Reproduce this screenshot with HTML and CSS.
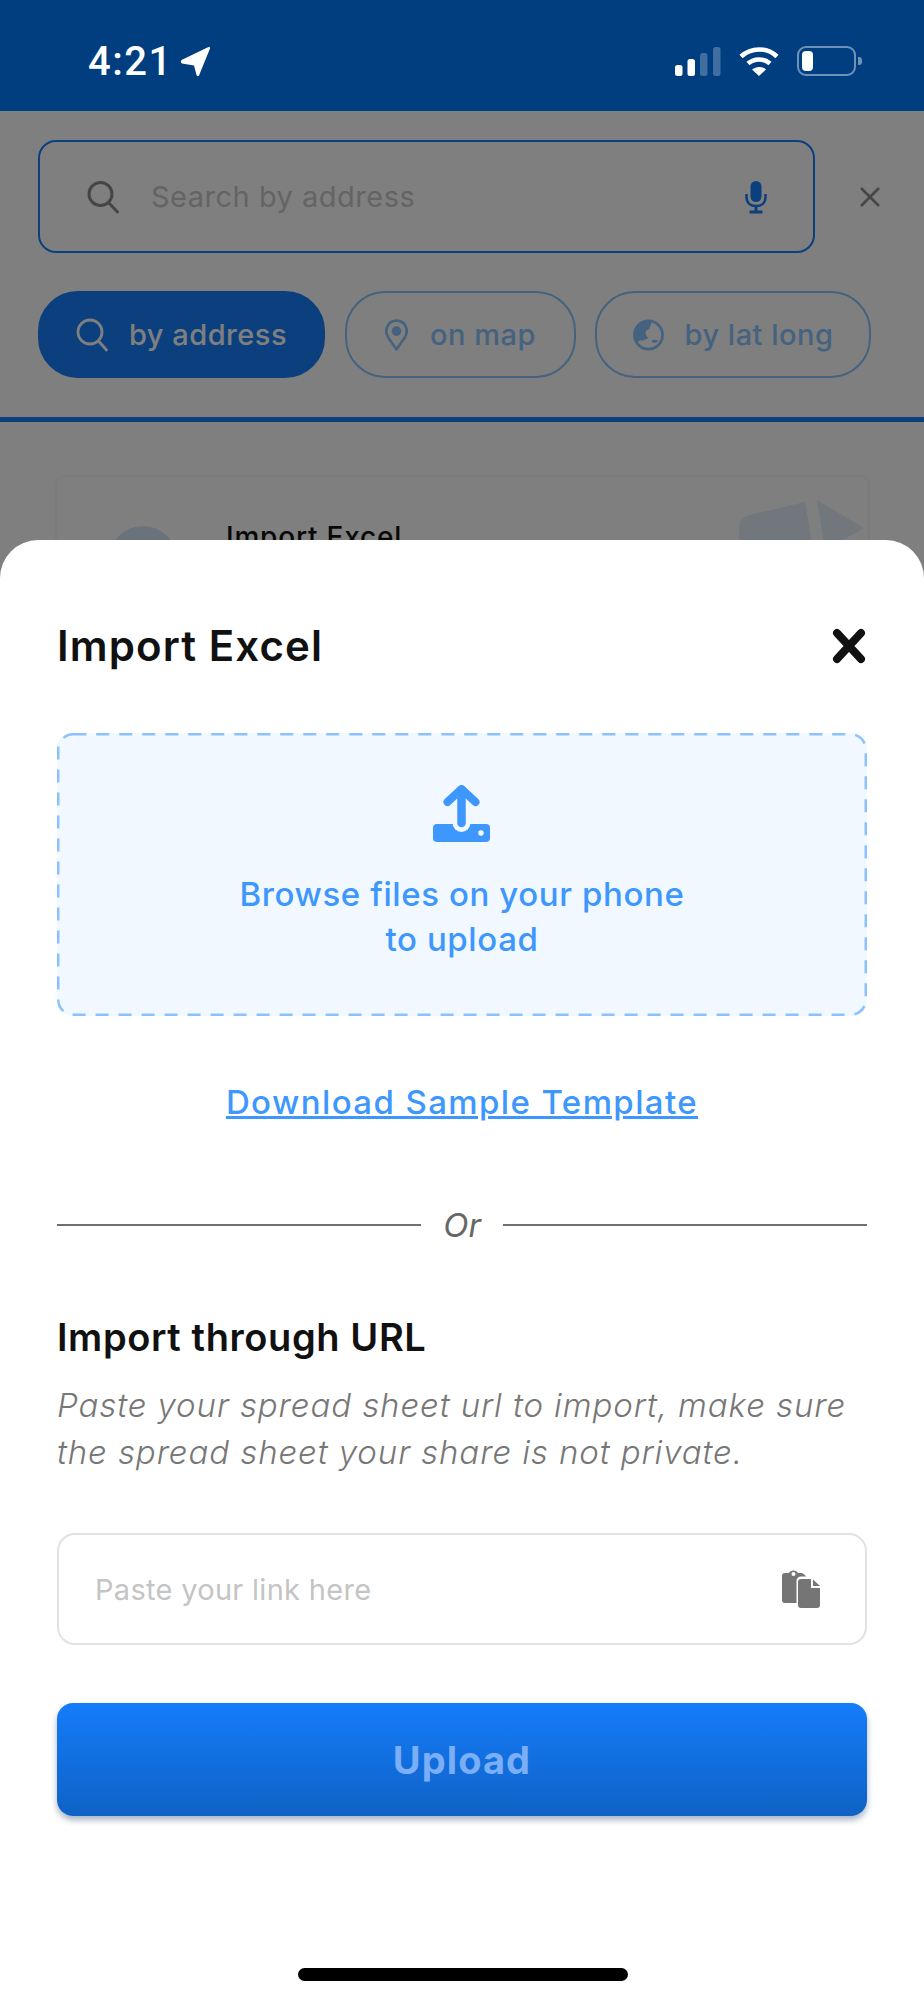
FILE: index.html
```html
<!DOCTYPE html>
<html>
    <head>
        <meta charset="utf-8">
        <title>Import Excel</title>
        <link rel="stylesheet" href="styles.css">
    </head>
    <body>
        <div class="screen">
            <div class="status-bar">
                <div class="status-left">
                    <span class="clock">4:21</span>
                    <svg width="31" height="31" viewBox="0 0 31 31"><path d="M1.500 14 L28.500 1 Q30.500 0.500 30 2.500 L19 29.500 Q17.500 31 16.500 29 L14 19.500 L2 17.500 Q0 16 1.500 14Z" fill="#fff"/></svg>
                </div>
                <div class="status-right">
                    <svg width="46" height="30" viewBox="0 0 46 30">
                        <rect x="0" y="19" width="7.500" height="11" rx="2.500" fill="#fff"/>
                        <rect x="12.500" y="13" width="7.500" height="17" rx="2.500" fill="#fff"/>
                        <rect x="25" y="7" width="7.500" height="23" rx="2.500" fill="#fff" opacity=".25"/>
                        <rect x="38" y="1" width="7.500" height="29" rx="2.500" fill="#fff" opacity=".25"/>
                    </svg>
                    <svg width="40" height="30" viewBox="0 0 40 30" fill="none" stroke="#fff" stroke-width="4.500">
                        <path d="M2 10.500 C12 1 28 1 38 10.500"/>
                        <path d="M9 17.500 C15 12 25 12 31 17.500"/>
                        <path d="M13 23.500 L20 30 L27 23.500 C23 20 17 20 13 23.500Z" fill="#fff" stroke="none"/>
                    </svg>
                    <div class="battery">
                        <div class="battery-body"><div class="battery-level"></div></div>
                        <div class="battery-tip"></div>
                    </div>
                </div>
            </div>

            <div class="search-row">
                <div class="search-box">
                    <svg width="34" height="34" viewBox="0 0 34 34" fill="none" stroke="#8a8a8a" stroke-width="3"><circle cx="14.500" cy="14" r="11.500"/><path d="M23 23 L31.500 32" stroke-linecap="round"/></svg>
                    <span class="search-text">Search by address</span>
                    <svg width="26" height="34" viewBox="0 0 26 34"><rect x="7.500" y="1" width="11" height="21" rx="5.500" fill="#167efc"/><path d="M3.500 14 V17 C3.500 23 7.500 26 13 26 C18.500 26 22.500 23 22.500 17 V14" fill="none" stroke="#167efc" stroke-width="2.500"/><path d="M13 26 V31 M6.500 32 H19.500" stroke="#167efc" stroke-width="3"/></svg>
                </div>
                <svg class="search-close" width="24" height="24" viewBox="0 0 24 24" stroke-width="2.600" fill="none"><path d="M3 3 L21 21 M21 3 L3 21" stroke="#8c8c8c"/></svg>
            </div>

            <div class="tabs">
                <div class="tab tab-address tab-active">
                    <svg width="32" height="34" viewBox="0 0 32 34" fill="none" stroke="#fff" stroke-width="2.800"><circle cx="14" cy="14" r="12"/><path d="M22.500 23 L30.500 32" stroke-linecap="round"/></svg>
                    <span>by address</span>
                </div>
                <div class="tab tab-map">
                    <svg width="25" height="34" viewBox="0 0 26 34" fill="none" stroke="#8ac4ff" stroke-width="2.800"><path d="M13 32 L4 19 C0 12 4 2 13 2 C22 2 26 12 22 19Z" stroke-linejoin="round"/><circle cx="13" cy="13" r="5" fill="#8ac4ff" stroke="none"/></svg>
                    <span>on map</span>
                </div>
                <div class="tab tab-latlong">
                    <svg width="31" height="34" viewBox="0 0 32 34"><circle cx="16" cy="17" r="14.500" fill="none" stroke="#8ac4ff" stroke-width="2.800"/><path d="M15 3 C8 3 2 9 2 17 C2 21 3 23 5 25 C6 22 9 22 10 23 L16 20 C13 17 12 15 14 12 C18 11 18 7 19 4 C18 3 16 3 15 3Z M19 23 C21 21 24 22 26 23 C24 26 20 26 19 23Z" fill="#8ac4ff"/></svg>
                    <span>by lat long</span>
                </div>
            </div>
            <div class="tabs-line"></div>

            <div class="list">
                <div class="list-card">
                    <div class="list-icon"></div>
                    <div class="list-title">Import Excel</div>
                    <svg class="list-art" width="125" height="60" viewBox="0 0 125 60"><path d="M0 28 Q0 18 10 15 L66 2 L76 60 H0Z M78 0 L125 28 L86 50Z" fill="#e2eef8"/></svg>
                </div>
            </div>

            <div class="dim"></div>

            <div class="sheet">
                <div class="sheet-head">
                    <h1>Import Excel</h1>
                    <svg width="36" height="36" viewBox="0 0 36 36" fill="none" stroke="#111" stroke-width="8" stroke-linecap="round"><path d="M6 5 L30 31 M30 5 L6 31"/></svg>
                </div>

                <div class="drop-zone">
                    <svg class="drop-border" width="810" height="283" viewBox="0 0 810 283"><rect x="1.250" y="1.250" width="807.500" height="280.500" rx="15" fill="none" stroke="#8bc1ff" stroke-width="2.500" stroke-dasharray="13 10"/></svg>
                    <svg width="58" height="58" viewBox="0 0 58 58">
                        <path d="M0 43 Q0 39 4 39 H53 Q57 39 57 43 V53 Q57 57 53 57 H4 Q0 57 0 53Z" fill="#3e97fd"/>
                        <circle cx="28.500" cy="38" r="9" fill="#f1f8ff"/>
                        <circle cx="48" cy="48" r="2.700" fill="#fff"/>
                        <path d="M28.500 5 V38" stroke="#3e97fd" stroke-width="8.500" stroke-linecap="round" fill="none"/>
                        <path d="M14.500 17 L28.500 4 L42.500 17" stroke="#3e97fd" stroke-width="8" stroke-linecap="round" stroke-linejoin="round" fill="none"/>
                    </svg>
                    <p>Browse files on your phone<br>to upload</p>
                </div>

                <a class="template-link" href="#">Download Sample Template</a>

                <div class="divider"><span>Or</span></div>

                <h2>Import through URL</h2>
                <p class="hint">Paste your spread sheet url to import, make sure<br>the spread sheet your share is not private.</p>

                <div class="link-box">
                    <span>Paste your link here</span>
                    <svg width="38" height="38" viewBox="0 0 38 38">
                        <path d="M3 3 H7 C8 -0.500 15 -0.500 16 3 H19 C21 3 23 5 24 6.500 H19 C16.500 6.500 14.500 8.500 14.500 11 V33 H3 C1 33 0 32 0 30 V6 C0 4 1 3 3 3Z" fill="#757575"/>
                        <circle cx="11.500" cy="4" r="2" fill="#fff"/>
                        <path d="M19 9 H29 V18 H38 V35 C38 37 37 38 35 38 H19 C17 38 16 37 16 35 V12 C16 10 17 9 19 9Z M31 9.500 L38 16 H31Z" fill="#757575"/>
                    </svg>
                </div>

                <button class="upload-btn">Upload</button>

                <div class="home-bar"></div>
            </div>
        </div>
    </body>
</html>
```

FILE: styles.css
```css
* {
    box-sizing: border-box;
}

body {
    margin: 0;
    font-family: Inter, "Noto Sans", sans-serif;
    background: #fff;
}

.screen {
    position: relative;
    width: 924px;
    height: 1999px;
    overflow: hidden;
    background: #fff;
}

.status-bar {
    position: relative;
    z-index: 2;
    height: 111px;
    padding: 46px 62px 0 88px;
    background: #003e80;
    display: flex;
    justify-content: space-between;
    align-items: flex-start;
    color: #fff;
}

.status-left {
    display: flex;
    align-items: center;
    gap: 7px;
}

.clock {
    font-family: Roboto, sans-serif;
    font-size: 40px;
    font-weight: 500;
    letter-spacing: 1.5px;
    line-height: 30px;
}

.status-right {
    display: flex;
    align-items: center;
    gap: 18px;
    height: 30px;
}

.battery {
    display: flex;
    align-items: center;
    gap: 2px;
}

.battery-body {
    width: 59px;
    height: 30px;
    padding: 3px;
    border: 2px solid #6f93b8;
    border-radius: 9px;
}

.battery-level {
    width: 11px;
    height: 100%;
    background: #fff;
    border-radius: 4px;
}

.battery-tip {
    width: 4px;
    height: 8px;
    background: #6f93b8;
    border-radius: 0 3px 3px 0;
}

.search-row {
    display: flex;
    align-items: center;
    padding: 29px 0 0 38px;
}

.search-box {
    width: 777px;
    height: 113px;
    padding: 0 44px 0 46px;
    border: 2.500px solid #167efc;
    border-radius: 18px;
    display: flex;
    align-items: center;
}

.search-text {
    flex: 1;
    margin-left: 31px;
    font-size: 29px;
    letter-spacing: 0.500px;
    color: #c8c8c8;
}

.search-close {
    margin-left: 43px;
}

.tabs {
    display: flex;
    gap: 19.500px;
    padding: 38px 0 0 38px;
}

.tab {
    height: 87px;
    border: 2px solid #8ac4ff;
    border-radius: 40px;
    display: flex;
    align-items: center;
    justify-content: center;
    gap: 21px;
    font-size: 29px;
    font-weight: 500;
    letter-spacing: 0.500px;
    color: #8ac4ff;
}

.tab-address {
    width: 287px;
}

.tab-map {
    width: 231px;
}

.tab-latlong {
    width: 276px;
}

.tab-active {
    background: #167efc;
    border-color: #167efc;
    color: #fff;
}

.tabs-line {
    height: 5px;
    margin-top: 39px;
    background: #167efc;
}

.list {
    padding: 53px 54px 0 55px;
}

.list-card {
    position: relative;
    height: 300px;
    border: 2px solid #f5f7f9;
    border-radius: 10px;
    display: flex;
    align-items: flex-start;
}

.list-icon {
    width: 68px;
    height: 68px;
    margin: 49px 0 0 52px;
    background: #d5e4f7;
    border-radius: 50%;
}

.list-title {
    margin: 43px 0 0 49px;
    font-size: 28px;
    font-weight: 500;
    letter-spacing: 0.800px;
    color: #111;
}

.list-art {
    position: absolute;
    top: 23px;
    right: 4px;
}

.dim {
    position: absolute;
    z-index: 1;
    left: 0;
    right: 0;
    top: 111px;
    bottom: 0;
    background: rgba(0, 0, 0, 0.5);
}

.sheet {
    position: absolute;
    z-index: 3;
    left: 0;
    right: 0;
    top: 540px;
    bottom: 0;
    padding: 0 57px;
    background: #fff;
    border-radius: 38px 38px 0 0;
}

.sheet-head {
    display: flex;
    justify-content: space-between;
    align-items: center;
    height: 130px;
    padding-top: 82px;
}

h1 {
    margin: 0;
    font-size: 42px;
    font-weight: 600;
    letter-spacing: 1.100px;
    line-height: 48px;
    color: #111;
}

.drop-zone {
    position: relative;
    height: 283px;
    margin-top: 63px;
    padding-top: 52px;
    background: #f1f8ff;
    border-radius: 15px;
    display: flex;
    flex-direction: column;
    align-items: center;
}

.drop-border {
    position: absolute;
    left: 0;
    top: 0;
}

.drop-zone p {
    margin: 29px 0 0;
    font-size: 33px;
    font-weight: 500;
    letter-spacing: 0.600px;
    line-height: 45px;
    text-align: center;
    color: #3e97fd;
}

.template-link {
    display: block;
    margin-top: 64px;
    font-size: 33px;
    font-weight: 500;
    letter-spacing: 1.400px;
    line-height: 44px;
    text-align: center;
    color: #3e97fd;
}

.divider {
    margin-top: 81px;
    display: flex;
    align-items: center;
    gap: 22px;
    font-size: 33px;
    font-style: italic;
    line-height: 40px;
    color: #666;
}

.divider::before,
.divider::after {
    content: "";
    flex: 1;
    height: 2px;
    background: #707070;
}

h2 {
    margin: 67px 0 0;
    font-size: 38px;
    font-weight: 600;
    letter-spacing: 0.600px;
    line-height: 50px;
    color: #111;
}

.hint {
    margin: 20px 0 0;
    font-size: 33px;
    font-weight: 300;
    font-style: italic;
    letter-spacing: 0.900px;
    line-height: 47px;
    color: #777;
}

.link-box {
    height: 112px;
    margin-top: 57px;
    padding: 0 45px 0 36px;
    border: 2px solid #e2e2e2;
    border-radius: 18px;
    display: flex;
    align-items: center;
    justify-content: space-between;
    font-size: 29px;
    letter-spacing: 0.300px;
    color: #c4c4c4;
}

.upload-btn {
    display: block;
    width: 100%;
    height: 113px;
    margin-top: 58px;
    border: none;
    border-radius: 16px;
    background: linear-gradient(#157cfa, #0f62c5);
    box-shadow: 0 4px 6px rgba(0, 40, 90, 0.35);
    font-family: inherit;
    font-size: 38px;
    font-weight: 700;
    letter-spacing: 1.100px;
    color: #7aaef7;
}

.home-bar {
    position: absolute;
    left: 298px;
    bottom: 18px;
    width: 330px;
    height: 13px;
    background: #000;
    border-radius: 7px;
}
```
